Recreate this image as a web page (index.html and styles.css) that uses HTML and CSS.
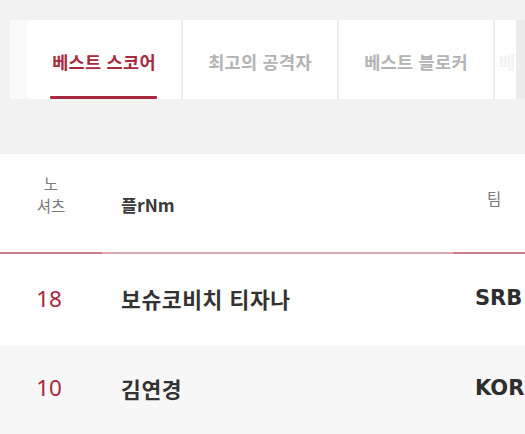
FILE: index.html
```html
<!DOCTYPE html>
<html lang="ko">
<head>
<meta charset="utf-8">
<link rel="stylesheet" href="styles.css">
</head>
<body>
<div class="page">
  <nav class="tabs">
    <div class="tabs-lead"></div>
    <div class="tab active"><span>베스트 스코어</span></div>
    <div class="tab"><span>최고의 공격자</span></div>
    <div class="tab"><span>베스트 블로커</span></div>
    <div class="tab faded"><span>베스트 세터</span></div>
  </nav>
  <section class="table">
    <div class="row head">
      <div class="c1 hsub">노<br>셔츠</div>
      <div class="c2 hname">플rNm</div>
      <div class="c3 hsub hteam">팀</div>
    </div>
    <div class="row">
      <div class="c1 num">18</div>
      <div class="c2 name">보슈코비치 티자나</div>
      <div class="c3 team">SRB</div>
    </div>
    <div class="row alt">
      <div class="c1 num">10</div>
      <div class="c2 name">김연경</div>
      <div class="c3 team">KOR</div>
    </div>
  </section>
</div>
</body>
</html>
```
FILE: styles.css
```css
* { box-sizing: border-box; }
html, body { margin: 0; padding: 0; }
body {
  background: #f2f2f2;
  font-family: "Noto Sans", "Noto Sans CJK KR", sans-serif;
  overflow: hidden;
  width: 525px;
  height: 434px;
}
.page { padding-top: 20px; }
.tabs {
  display: flex;
  margin-left: 10px;
  height: 79px;
  background: #ececec;
  gap: 2px;
  width: 515px;
  overflow: hidden;
}
.tabs-lead {
  width: 17px;
  flex: none;
  background: #fafafa;
  margin-right: -2px;
}
.tab {
  flex: none;
  width: 154px;
  background: #fff;
  display: flex;
  align-items: center;
  justify-content: center;
  position: relative;
  font-family: "Noto Sans CJK KR", sans-serif;
  font-weight: 700;
  font-size: 17.5px;
  letter-spacing: 0.3px;
  color: #b3b3b3;
}
.tab:nth-child(2) { border-radius: 3px 0 0 3px; }
.tab span { display: block; margin-top: 3px; white-space: nowrap; }
.tab.active { color: #a8283e; }
.tab.active::after {
  content: "";
  position: absolute;
  left: 23px;
  right: 24px;
  bottom: 0;
  height: 3px;
  background: #a8283e;
  border-radius: 1px;
}
.tab.faded { width: 21px; justify-content: flex-end; overflow: hidden; color: #f2f2f2; }
.tab.faded span { margin-right: -2px; width: 19px; overflow: hidden; }

.table {
  margin-top: 54px;
  background: #fff;
  border-top: 1px solid #ebebeb;
  width: 525px;
  overflow: hidden;
}
.row {
  display: grid;
  grid-template-columns: 102px 351px 72px;
  height: 92px;
  align-items: center;
}
.row.alt { background: #f7f7f7; }
.row.head {
  height: 100px;
  background: linear-gradient(to right, #c87e89 0 102px, #dba8af 102px 453px, #c87e89 453px) bottom / 100% 2px no-repeat, #fff;
  padding-bottom: 2px;
}
.hsub {
  font-family: "Noto Sans CJK KR", sans-serif;
  font-size: 15.5px;
  line-height: 22px;
  color: #7a7a7a;
  text-align: center;
  padding-bottom: 18px;
}
.hname {
  font-family: "Noto Sans CJK KR", sans-serif;
  font-weight: 700;
  font-size: 17.5px;
  color: #3a3a3a;
  padding-left: 19px;
  padding-top: 2px;
}
.hteam { text-align: left; padding-left: 34px; padding-top: 0; padding-bottom: 10px; }
.num {
  text-align: center;
  color: #a8283e;
  font-size: 22.5px;
  font-weight: 400;
  padding-right: 4px;
  padding-bottom: 4px;
}
.row.alt .num, .row.alt .name, .row.alt .team { padding-bottom: 8px; }
.row.alt .num { padding-bottom: 10px; }
.name {
  padding-left: 19px;
  font-family: "Noto Sans CJK KR", sans-serif;
  font-weight: 700;
  font-size: 21.5px;
  letter-spacing: 0.6px;
  color: #333;
  padding-bottom: 4px;
  white-space: nowrap;
}
.team {
  padding-left: 22px;
  font-family: "DejaVu Sans", sans-serif;
  font-weight: 700;
  font-size: 21px;
  color: #2e2e2e;
  padding-bottom: 4px;
  white-space: nowrap;
  overflow: hidden;
}
```
